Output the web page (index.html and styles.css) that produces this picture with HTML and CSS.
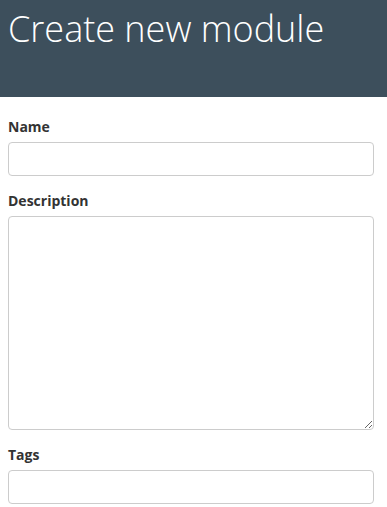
FILE: index.html
```html
<!DOCTYPE html>
<html lang="en">
<head>
    <meta charset="UTF-8">
    <meta name="viewport" content="width=device-width, initial-scale=1.0">
    <title>Create new module</title>
    <link rel="stylesheet" href="styles.css">
</head>
<body>
    <header class="page-header">
        <h1>Create new module</h1>
    </header>
    <form class="module-form">
        <div class="form-group">
            <label for="name">Name</label>
            <input type="text" id="name" class="form-control">
        </div>
        <div class="form-group">
            <label for="description">Description</label>
            <textarea id="description" class="form-control textarea"></textarea>
        </div>
        <div class="form-group">
            <label for="tags">Tags</label>
            <input type="text" id="tags" class="form-control">
        </div>
    </form>
</body>
</html>
```

FILE: styles.css
```css
/* General Styles */
body {
    font-family: 'Open Sans', sans-serif;
    color: #333;
    background: #fff;
    margin: 0;
    padding: 0;
}

.page-header {
    background-color: #3d4f5c;
    height: 97px;
    box-sizing: border-box;
    padding: 5px 8px 0 8px;
}

.page-header h1 {
    margin: 0;
    color: #fff;
    font-size: 36px;
    font-weight: 300;
    line-height: 48px;
}

.module-form {
    padding: 19px 13px 0 8px;
}

.form-group {
    margin-bottom: 14px;
}

.form-group label {
    display: block;
    font-size: 14px;
    font-weight: bold;
    line-height: 20px;
    padding-top: 1px;
    margin-bottom: 5px;
}

.form-control {
    display: block;
    width: 100%;
    height: 34px;
    box-sizing: border-box;
    margin: 0;
    padding: 6px 12px;
    border: 1px solid #ccc;
    border-radius: 4px;
    font-family: inherit;
    font-size: 14px;
    background: #fff;
}

.textarea {
    height: 214px;
    resize: vertical;
}
```
